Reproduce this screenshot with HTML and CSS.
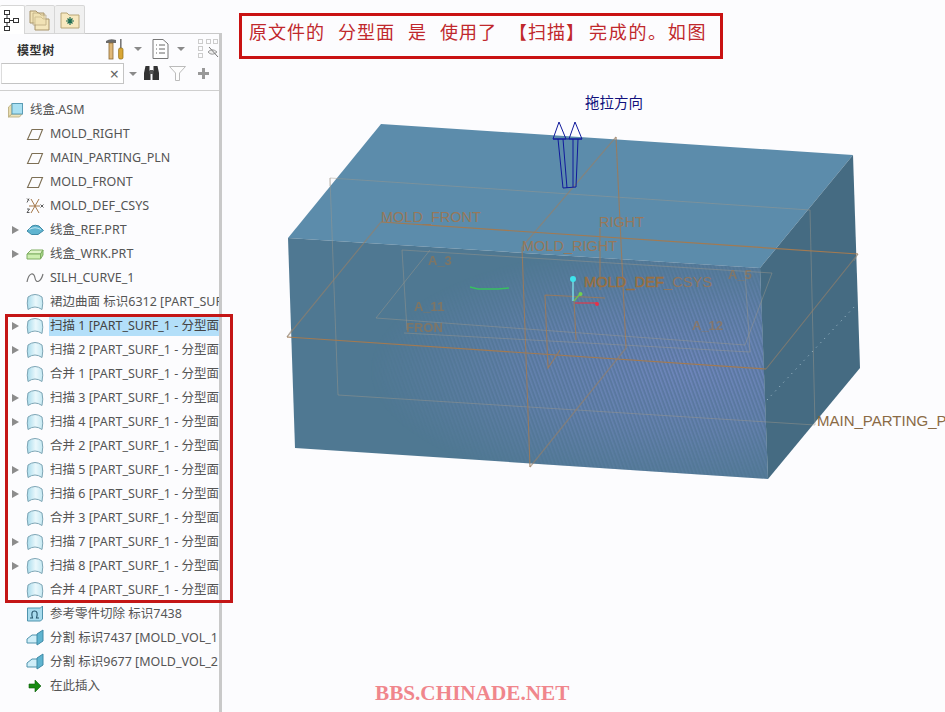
FILE: index.html
```html
<!DOCTYPE html>
<html lang="zh">
<head>
<meta charset="utf-8">
<title>线盒.ASM</title>
<link rel="stylesheet" href="styles.css">
</head>
<body>
<svg class="defs" width="0" height="0" aria-hidden="true">
  <defs>
    <linearGradient id="surfFill" x1="0" y1="0" x2="1" y2="0"><stop offset="0" stop-color="#a9dcec"/><stop offset="0.55" stop-color="#eaf8fc"/><stop offset="1" stop-color="#c4e8f2"/></linearGradient>
    <symbol id="i-asm" viewBox="0 0 18 18"><path d="M1.500 6 L5 3 V13 L1.500 16Z" fill="#e8dcae" stroke="#b5a878" stroke-width=".8"/><path d="M1.500 16 L5 13 H15 L12.500 16Z" fill="#efe5bd" stroke="#b5a878" stroke-width=".8"/><rect x="5" y="2.500" width="10.500" height="10.500" fill="#a9e0f2" stroke="#5b9cb5"/></symbol>
    <symbol id="i-plane" viewBox="0 0 18 18"><path d="M1.500 14.500 L6 4.500 H16.500 L12.500 14.500Z" fill="none" stroke="#7d6f55" stroke-width="1.100"/></symbol>
    <symbol id="i-csys" viewBox="0 0 18 18"><path d="M5 2 L13 16 M13 2 L5 16 M3 9 H14" fill="none" stroke="#a5784a" stroke-width="1"/><path d="M1 1.500 L3 3.500 M3 1.500 L1 5.500 M1 12 H3.500 L1 15.500 H3.500 M14.500 7.500 L17.500 10.500 M17.500 7.500 L14.500 10.500" fill="none" stroke="#333" stroke-width=".8"/></symbol>
    <symbol id="i-ref" viewBox="0 0 18 18"><path d="M1 10 L6 5 Q9 3.500 13 5 L17.500 9.500 L12 13.500 H5.500Z" fill="#5fb4d0" stroke="#3f8aa6"/><path d="M3 8.500 Q9 5 15 8.500" fill="none" stroke="#c2e8f4"/></symbol>
    <symbol id="i-wrk" viewBox="0 0 18 18"><path d="M1 9 L5 5 H17 L14.500 9Z" fill="#e0f3c9" stroke="#7fae62"/><path d="M1 9 H14.500 V14 H1Z" fill="#cdeeb0" stroke="#7fae62"/><path d="M14.500 9 L17 5 V10 L14.500 14Z" fill="#a8d888" stroke="#7fae62"/></symbol>
    <symbol id="i-curve" viewBox="0 0 18 18"><path d="M1 13 C3 3 8 3 9 9 C10 15 15 13 17 5" fill="none" stroke="#777" stroke-width="1.200"/></symbol>
    <symbol id="i-surf" viewBox="0 0 18 18"><path d="M2 4 Q9 -1 16 4 Q17.500 10 16 16.500 Q9 11.500 2 16.500 Q.5 10 2 4Z" fill="url(#surfFill)" stroke="#7da5b5" stroke-width="1"/></symbol>
    <symbol id="i-cut" viewBox="0 0 18 18"><path d="M1.500 3 H14.500 L16.500 1 V14 L14.500 16 H1.500Z" fill="#a8dcee" stroke="#4f93ad"/><path d="M4 13 H6.500 Q4.500 6 8.500 6 Q12.500 6 10.500 13 H13" fill="none" stroke="#26566b" stroke-width="1.100"/></symbol>
    <symbol id="i-split" viewBox="0 0 18 18"><path d="M1 10 L6 6 H12 V14 H1Z" fill="#cfeef8" stroke="#4f93ad"/><path d="M11 5 L17 1 V12 L11 16Z" fill="#5fb4d0" stroke="#3f8aa6"/></symbol>
    <symbol id="i-arrow" viewBox="0 0 18 18"><path d="M3 7 H9 V3 L15 9 L9 15 V11 H3Z" fill="#178a12" stroke="#0c5a08" stroke-width=".6"/></symbol>
    <pattern id="hatch" width="3.500" height="3.500" patternUnits="userSpaceOnUse" patternTransform="rotate(-20)"><rect width="3.500" height="3.500" fill="#5d78a4"/><rect width="1.500" height="3.500" fill="#7288c0"/></pattern>
    <radialGradient id="hatchFade" gradientUnits="userSpaceOnUse" cx="690" cy="370" r="320" gradientTransform="translate(0 222) scale(1 .4)"><stop offset="0" stop-color="#fff" stop-opacity=".95"/><stop offset=".5" stop-color="#fff" stop-opacity=".6"/><stop offset="1" stop-color="#fff" stop-opacity="0"/></radialGradient>
    <mask id="hatchMask" maskUnits="userSpaceOnUse" x="280" y="230" width="500" height="260"><rect x="280" y="230" width="500" height="260" fill="url(#hatchFade)"/></mask>
  </defs>
</svg>

<aside class="side">
  <nav class="tabs">
    <div class="tab tab-on"><svg width="18" height="24" viewBox="0 0 18 24"><g fill="#fff" stroke="#333"><rect x="1.500" y="2.500" width="5" height="4"/><rect x="1.500" y="10.500" width="5" height="4"/><rect x="1.500" y="18.500" width="5" height="4"/><rect x="10.500" y="10.500" width="5" height="4"/></g><path d="M4 7V10M4 15V18M7 12.500H10" stroke="#333"/></svg></div>
    <div class="tab"><svg width="22" height="24" viewBox="0 0 22 24"><path d="M1 3H7L9 5H15V15H1Z" fill="#f2e3b6" stroke="#a8946a"/><path d="M6 9H12L14 11H20V22H6Z" fill="#f5e7bd" stroke="#a8946a"/><path d="M4 5H10L12 7H17V17H4Z" fill="#efe0b0" stroke="#a8946a" opacity=".6"/></svg></div>
    <div class="tab"><svg width="20" height="20" viewBox="0 0 20 20"><path d="M1 3H7L9 5H19V18H1Z" fill="#f7e8bf" stroke="#b8a678"/><path d="M10 7V15M6 11H14M7.500 8.500L12.500 13.500M12.500 8.500L7.500 13.500" stroke="#1b6b52" stroke-width="1.200"/></svg></div>
  </nav>
  <div class="panel">
    <header class="head">
      <strong class="head-title">模型树</strong>
      <svg class="ic-tools" width="20" height="22" viewBox="0 0 20 22"><path d="M1 3 Q5 0 11 2 V5 H1Z" fill="#6b6b6b"/><rect x="4" y="5" width="4" height="16" fill="#e0b878" stroke="#8c6a35" stroke-width=".8"/><rect x="15" y="1" width="1.600" height="10" fill="#777"/><rect x="13.600" y="10" width="4.400" height="11" rx="1.500" fill="#d9a635" stroke="#8c6a15" stroke-width=".7"/></svg>
      <i class="drop drop-tools"></i>
      <svg class="ic-doc" width="17" height="20" viewBox="0 0 17 20"><path d="M1 .5H11L16 5V19.500H1Z" fill="#fff" stroke="#777"/><path d="M4 6H5M7 6H13M4 10H5M7 10H13M4 14H5M7 14H13" stroke="#666"/></svg>
      <i class="drop drop-doc"></i>
      <svg class="ic-eye" width="21" height="20" viewBox="0 0 21 20"><g fill="none" stroke="#ccc"><rect x=".5" y=".5" width="4" height="4"/><rect x=".5" y="7.500" width="4" height="4"/><rect x=".5" y="14.500" width="4" height="4"/><rect x="8.500" y=".5" width="4" height="4"/><rect x="15.500" y=".5" width="4" height="4"/></g><path d="M10 13 Q14 8.500 19 13 Q14 17.500 10 13Z" fill="#eee" stroke="#999"/><path d="M11 8 L20 18" stroke="#777"/></svg>
    </header>
    <div class="search">
      <div class="search-box"><span class="search-x">×</span></div>
      <i class="drop drop-search"></i>
      <svg class="ic-bino" width="17" height="17" viewBox="0 0 17 17"><path d="M2.500 1H6.500V6H7.500V15H1V8Z M10.500 1H14.500L16 8V15H9.500V6H10.500Z" fill="#333"/><rect x="6.500" y="5" width="4" height="4" fill="#555"/></svg>
      <svg class="ic-funnel" width="17" height="15" viewBox="0 0 17 15"><path d="M.5 .5H16.500L10.500 7V14.500H6.500V7Z" fill="#fdfdfd" stroke="#bbb"/></svg>
      <span class="ic-plus"></span>
    </div>
    <ul class="tree">
      <li class="row row-root"><svg class="ic" width="18" height="18"><use href="#i-asm"/></svg><span class="lbl">线盒.ASM</span></li>
      <li class="row"><svg class="ic" width="18" height="18"><use href="#i-plane"/></svg><span class="lbl">MOLD_RIGHT</span></li>
      <li class="row"><svg class="ic" width="18" height="18"><use href="#i-plane"/></svg><span class="lbl">MAIN_PARTING_PLN</span></li>
      <li class="row"><svg class="ic" width="18" height="18"><use href="#i-plane"/></svg><span class="lbl">MOLD_FRONT</span></li>
      <li class="row"><svg class="ic" width="18" height="18"><use href="#i-csys"/></svg><span class="lbl">MOLD_DEF_CSYS</span></li>
      <li class="row exp"><svg class="ic" width="18" height="18"><use href="#i-ref"/></svg><span class="lbl">线盒_REF.PRT</span></li>
      <li class="row exp"><svg class="ic" width="18" height="18"><use href="#i-wrk"/></svg><span class="lbl">线盒_WRK.PRT</span></li>
      <li class="row"><svg class="ic" width="18" height="18"><use href="#i-curve"/></svg><span class="lbl">SILH_CURVE_1</span></li>
      <li class="row"><svg class="ic" width="18" height="18"><use href="#i-surf"/></svg><span class="lbl">裙边曲面 标识6312 [PART_SUF</span></li>
      <li class="row exp sel"><svg class="ic" width="18" height="18"><use href="#i-surf"/></svg><span class="lbl">扫描 1 [PART_SURF_1 - 分型面</span></li>
      <li class="row exp"><svg class="ic" width="18" height="18"><use href="#i-surf"/></svg><span class="lbl">扫描 2 [PART_SURF_1 - 分型面</span></li>
      <li class="row"><svg class="ic" width="18" height="18"><use href="#i-surf"/></svg><span class="lbl">合并 1 [PART_SURF_1 - 分型面</span></li>
      <li class="row exp"><svg class="ic" width="18" height="18"><use href="#i-surf"/></svg><span class="lbl">扫描 3 [PART_SURF_1 - 分型面</span></li>
      <li class="row exp"><svg class="ic" width="18" height="18"><use href="#i-surf"/></svg><span class="lbl">扫描 4 [PART_SURF_1 - 分型面</span></li>
      <li class="row"><svg class="ic" width="18" height="18"><use href="#i-surf"/></svg><span class="lbl">合并 2 [PART_SURF_1 - 分型面</span></li>
      <li class="row exp"><svg class="ic" width="18" height="18"><use href="#i-surf"/></svg><span class="lbl">扫描 5 [PART_SURF_1 - 分型面</span></li>
      <li class="row exp"><svg class="ic" width="18" height="18"><use href="#i-surf"/></svg><span class="lbl">扫描 6 [PART_SURF_1 - 分型面</span></li>
      <li class="row"><svg class="ic" width="18" height="18"><use href="#i-surf"/></svg><span class="lbl">合并 3 [PART_SURF_1 - 分型面</span></li>
      <li class="row exp"><svg class="ic" width="18" height="18"><use href="#i-surf"/></svg><span class="lbl">扫描 7 [PART_SURF_1 - 分型面</span></li>
      <li class="row exp"><svg class="ic" width="18" height="18"><use href="#i-surf"/></svg><span class="lbl">扫描 8 [PART_SURF_1 - 分型面</span></li>
      <li class="row"><svg class="ic" width="18" height="18"><use href="#i-surf"/></svg><span class="lbl">合并 4 [PART_SURF_1 - 分型面</span></li>
      <li class="row"><svg class="ic" width="18" height="18"><use href="#i-cut"/></svg><span class="lbl">参考零件切除 标识7438</span></li>
      <li class="row"><svg class="ic" width="18" height="18"><use href="#i-split"/></svg><span class="lbl">分割 标识7437 [MOLD_VOL_1</span></li>
      <li class="row"><svg class="ic" width="18" height="18"><use href="#i-split"/></svg><span class="lbl">分割 标识9677 [MOLD_VOL_2</span></li>
      <li class="row"><svg class="ic" width="18" height="18"><use href="#i-arrow"/></svg><span class="lbl">在此插入</span></li>
    </ul>
  </div>
  <div class="tree-mark"></div>
</aside>

<main class="stage">
  <svg class="scene" width="723" height="712" viewBox="222 0 723 712">
    <polygon class="f-top" points="288,238 381,124 853,155 760,268"/>
    <polygon class="f-front" points="288,238 760,268 768,479 295,448"/>
    <polygon class="f-hatch" points="288,238 760,268 768,479 295,448" fill="url(#hatch)" mask="url(#hatchMask)"/>
    <polygon class="f-right" points="760,268 853,155 860,368 768,479"/>
    <path class="dots" d="M767 400 L856 305"/>

    <!-- MOLD_FRONT datum -->
    <path class="d-thin" d="M330 178 L810 210 L815 425 L338 395 Z M330 178 V186"/>
    <!-- RIGHT datum -->
    <path class="d-soft" d="M616 137 L522 247 M530 467 L626 348"/>
    <path class="d-mid" d="M522 247 L530 467 M616 137 L626 348"/>
    <!-- parting plane -->
    <path class="d-soft" d="M381 222 L287 337 M858 254 L766 369"/>
    <path class="d-thick" d="M381 222 L858 254 M287 337 L766 369"/>
    <path class="d-thin" d="M287 337 L292 329 M858 254 L854 261"/>
    <!-- inner outlines -->
    <path class="d-thin" d="M402 250 L772 273 L745 345 L376 318 L430 250 M402 250 L407 330 M745 272 L750 352 L404 333"/>
    <path class="d-mid" d="M545 295 L605 298 M545 295 L548 368 L560 350 M574 300 L576 340 M600 228 L600 290"/>

    <text class="t-d" x="381" y="222">MOLD_FRONT</text>
    <text class="t-d" x="599" y="227">RIGHT</text>
    <text class="t-d" x="522" y="251">MOLD_RIGHT</text>
    <text class="t-c" x="584" y="287"><tspan class="t-c-hi">MOLD_DEF</tspan>_CSYS</text>
    <text class="t-m" x="817" y="426">MAIN_PARTING_PLN</text>
    <text class="t-a" x="428" y="265">A_3</text>
    <text class="t-a" x="414" y="311">A_11</text>
    <text class="t-a" x="406" y="332">FRON</text>
    <text class="t-a" x="728" y="279">A_5</text>
    <text class="t-a" x="692" y="330">A_12</text>

    <path class="curve" d="M470 287 L478 289 L498 289 L509 288"/>
    <path class="ax-c" d="M573 279 V301"/><circle class="ax-cf" cx="573" cy="279" r="3"/>
    <path class="ax-g" d="M574 301 L580 294"/><circle class="ax-gf" cx="580.500" cy="294" r="2"/>
    <path class="ax-r" d="M575 303 H597"/><circle class="ax-rf" cx="597" cy="304" r="2"/>

    <path class="pull" d="M553 139 L559 122 L566 139 Z M569 139 L575 122 L582 139 Z M553 139 H582 M558 139 L563 188 L576 187 L578 139 M563 139 L567 188 M573 139 V187"/>
    <text class="t-pull" x="585" y="108">拖拉方向</text>
  </svg>
  <p class="note"><span>原文件的</span><span>分型面</span><span>是</span><span>使用了</span><span class="scan">【扫描】</span><span class="tail">完成的。如图</span></p>
  <div class="mark">BBS.CHINADE.NET</div>
</main>
```

FILE: styles.css
```css
* { box-sizing: border-box; }
html, body { margin: 0; height: 100%; }
body {
  display: flex;
  width: 945px;
  height: 712px;
  overflow: hidden;
  background: #fcfcfe;
  font-family: "Noto Sans", "Noto Sans CJK SC", sans-serif;
  color: #555;
}
.defs { position: absolute; }

/* sidebar */
.side { position: relative; width: 222px; flex: none; display: flex; flex-direction: column; }
.tabs { display: flex; height: 34px; padding-top: 5px; }
.tab {
  position: relative; z-index: 1;
  width: 30px; height: 29px;
  display: flex; align-items: center; justify-content: center;
  background: #f0f0f0;
  border: 1px solid #d6d6d6; border-left: 0;
  border-radius: 2px 2px 0 0;
}
.tab-on { width: 25px; background: #fff; border-bottom: 0; justify-content: flex-start; padding-left: 3px; }
.panel {
  flex: 1; min-height: 0;
  border-top: 1px solid #c8c8c8;
  border-right: 3px solid #c9c9c9;
  background: #fcfcfe;
  display: flex; flex-direction: column;
  margin-top: -1px;
}
.head { display: flex; align-items: center; height: 29px; padding-top: 1px; }
.head-title { font: 700 12px "Noto Sans CJK SC", sans-serif; color: #333; margin-left: 17px; width: 90px; letter-spacing: .6px; }
.ic-tools { flex: none; }
.drop { display: block; flex: none; width: 0; height: 0; border: 4px solid transparent; border-top: 4px solid #8a8a8a; border-bottom: 0; }
.drop-tools { margin-left: 9px; }
.ic-doc { margin-left: 10px; flex: none; }
.drop-doc { margin-left: 8px; }
.ic-eye { margin-left: 13px; flex: none; }

.search { display: flex; align-items: center; height: 28px; border-bottom: 1px solid #cfcfcf; padding-bottom: 6px; }
.search-box {
  width: 123px; height: 21px; margin-left: 1px;
  background: #fff; border: 1px solid #c4c4c4; border-left: 1px solid #dcdcdc;
  display: flex; align-items: center; justify-content: flex-end; padding-right: 4px;
}
.search-x { font-size: 16px; line-height: 1; color: #666; }
.drop-search { margin-left: 5px; }
.ic-bino { margin-left: 6px; flex: none; }
.ic-funnel { margin-left: 9px; flex: none; }
.ic-plus {
  flex: none; width: 11px; height: 11px; margin-left: 12px;
  background: linear-gradient(#999, #999) center/11px 3px no-repeat, linear-gradient(#999, #999) center/3px 11px no-repeat;
}

/* tree */
.tree { list-style: none; margin: 7px 0 0; padding: 0; }
.row { position: relative; height: 24px; display: flex; align-items: center; padding-left: 26px; font-size: 12.500px; white-space: nowrap; overflow: hidden; }
.ic { flex: none; width: 18px; height: 18px; }
.lbl { margin-left: 6px; line-height: 20px; padding-right: 30px; }
.row-root { padding-left: 7px; }
.row-root .lbl { margin-left: 5px; }
.exp::before {
  content: ""; position: absolute; left: 12px; top: 8px;
  border-left: 7px solid #8c8c8c; border-top: 4px solid transparent; border-bottom: 4px solid transparent;
}
.sel .lbl { background: #b3dff9; color: #444; margin-left: 5px; padding-left: 1px; }
.tree-mark {
  position: absolute; left: 5px; top: 314px; width: 228px; height: 289px;
  border: 3px solid #c41616;
  pointer-events: none;
}

/* stage */
.stage { position: relative; flex: 1; min-width: 0; overflow: hidden; }
.scene { display: block; }
.f-top { fill: #5c8cab; }
.f-front { fill: #4f7892; }
.f-right { fill: #456b82; }
.dots { fill: none; stroke: #a9c2d0; stroke-width: 1; stroke-dasharray: 1 5; }
.d-thin, .d-mid, .d-thick, .d-soft { fill: none; }
.d-thin { stroke: #a09a8c; stroke-width: .9; opacity: .5; }
.d-soft { stroke: #94806a; stroke-width: 1.200; opacity: .65; }
.d-mid { stroke: #9c7a5a; stroke-width: 1.100; opacity: .9; }
.d-thick { stroke: #a27a52; stroke-width: 1.200; }
.t-d, .t-m, .t-c, .t-a { font-family: "Liberation Sans", sans-serif; }
.t-d { font-size: 14.500px; fill: #97785a; }
.t-m { font-size: 15px; fill: #8a6a45; }
.t-c { font-size: 14.700px; fill: #8f7660; }
.t-c-hi { fill: #9a7040; stroke: #9a7040; stroke-width: .5; }
.t-a { font-size: 13px; fill: #a5743f; font-weight: 700; opacity: .55; }
.curve { fill: none; stroke: #38c060; stroke-width: 1.400; }
.ax-c { stroke: #7fe8ee; stroke-width: 1.300; }
.ax-cf { fill: #3fe4ec; }
.ax-g { stroke: #70c050; stroke-width: 1.300; }
.ax-gf { fill: #70d050; }
.ax-r { stroke: #e03a4a; stroke-width: 1.200; }
.ax-rf { fill: #e8304a; }
.pull { fill: none; stroke: #101a9c; stroke-width: 1; }
.t-pull { font: 14.500px "Noto Sans CJK SC", sans-serif; fill: #10107c; }

.note {
  position: absolute; left: 17px; top: 13px; margin: 0;
  width: 484px; height: 46px;
  padding: 2px 0 0 7px;
  border: 3px solid #c91212;
  font: 18px/26px "Noto Sans CJK SC", sans-serif;
  letter-spacing: 1px;
  color: #c0282c;
  white-space: nowrap;
  display: flex; gap: 13px;
}
.note .scan { margin-left: -1px; }
.note .tail { margin-left: -9px; letter-spacing: 1.700px; }
.mark {
  position: absolute; left: 153px; top: 681px;
  font: 700 21.200px/24px "Liberation Serif", serif;
  color: #f0868c;
}
```
